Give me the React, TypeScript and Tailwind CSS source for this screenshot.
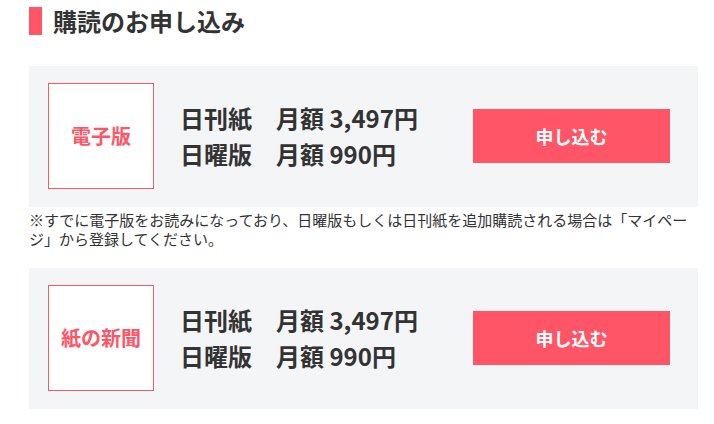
const plans = [
  { label: '電子版', note: true },
  { label: '紙の新聞', note: false },
];

function PlanCard({ label }: { label: string }) {
  return (
    <div className="flex items-center bg-[#f4f5f7] pt-[17px] pb-[18px] pl-[19px] pr-[28px]">
      <div className="flex h-[106px] w-[106px] shrink-0 items-center justify-center border border-[#f35a6a] bg-white">
        <span className="text-[20px] font-bold leading-none text-[#ff5566]">{label}</span>
      </div>
      <div className="ml-[26px] flex-1 text-[24px] font-bold leading-[36px] text-[#333]">
        <p>日刊紙　月額 3,497円</p>
        <p>日曜版　月額 990円</p>
      </div>
      <button className="flex h-[54px] w-[197px] items-center justify-center bg-[#ff5566] text-[18px] font-bold text-white">
        申し込む
      </button>
    </div>
  );
}

export default function App() {
  return (
    <div
      className="min-h-[424px] bg-white pl-[29px] pr-[16px] pt-[7px] text-[#333]"
      style={{ fontFamily: '"Noto Sans CJK JP", "Noto Sans", sans-serif' }}
    >
      <h2 className="flex h-[28px] items-center">
        <span className="h-[28px] w-[13px] bg-[#ff5566]" />
        <span className="ml-[11px] text-[24px] font-bold leading-[28px] text-[#333]">購読のお申し込み</span>
      </h2>

      <div className="mt-[31px]">
        {plans.map((p) => (
          <div key={p.label}>
            <PlanCard label={p.label} />
            {p.note && (
              <p className="mt-[3px] mb-[20px] text-[15px] leading-[19px] text-[#333]">
                ※すでに電子版をお読みになっており、日曜版もしくは日刊紙を追加購読される場合は「マイページ」から登録してください。
              </p>
            )}
          </div>
        ))}
      </div>
    </div>
  );
}
